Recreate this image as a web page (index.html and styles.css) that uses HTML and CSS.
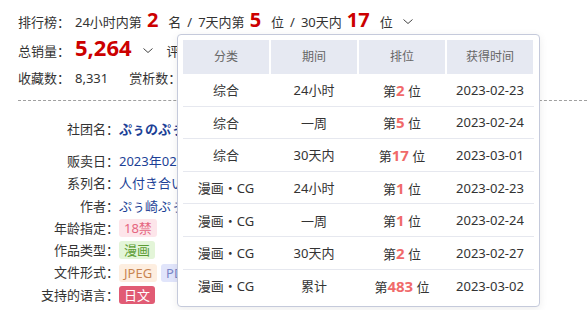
FILE: index.html
```html
<!DOCTYPE html>
<html lang="zh-CN">
<head>
<meta charset="utf-8">
<title>作品信息</title>
<link rel="stylesheet" href="styles.css">
</head>
<body>
<div class="page">
  <div class="stats">
    <div class="srow r1">
      <span class="lbl">排行榜：</span><span>24小时内第</span><b class="big">2</b><span>名</span><span class="sl">/</span><span>7天内第</span><b class="big">5</b><span>位</span><span class="sl">/</span><span>30天内</span><b class="big">17</b><span>位</span><svg class="chev chev1" viewBox="0 0 10 5"><path d="M0.5 0.5 L5 4.5 L9.5 0.5" /></svg>
    </div>
    <div class="srow r2">
      <span class="lbl">总销量：</span><b class="huge">5,264</b><svg class="chev chev2" viewBox="0 0 10 5"><path d="M0.5 0.5 L5 4.5 L9.5 0.5" /></svg><span class="after">评价数：4.87</span>
    </div>
    <div class="srow r3">
      <span class="lbl">收藏数：</span><span>8,331</span><span class="lbl2">赏析数：</span><span>126</span>
    </div>
  </div>
  <div class="info">
    <div class="irow first"><span class="ilbl">社团名：</span><span class="val strong">ぷぅのぷぅ</span></div>
    <div class="irow"><span class="ilbl">贩卖日：</span><span class="val">2023年02月23日 0时</span></div>
    <div class="irow"><span class="ilbl">系列名：</span><span class="val">人付き合いが苦手な</span></div>
    <div class="irow"><span class="ilbl">作者：</span><span class="val">ぷぅ崎ぷぅ</span></div>
    <div class="irow"><span class="ilbl">年龄指定：</span><span class="tag pink">18禁</span></div>
    <div class="irow"><span class="ilbl">作品类型：</span><span class="tag green">漫画</span></div>
    <div class="irow"><span class="ilbl">文件形式：</span><span class="tag orange">JPEG</span><span class="tag blue">PDF</span></div>
    <div class="irow"><span class="ilbl">支持的语言：</span><span class="tag red">日文</span></div>
  </div>

  <div class="pop">
    <div class="prow head">
      <div class="hc">分类</div><div class="hc">期间</div><div class="hc">排位</div><div class="hc">获得时间</div>
    </div>
    <div class="prow"><div>综合</div><div>24小时</div><div>第<b class="rk">2</b> 位</div><div>2023-02-23</div></div>
    <div class="prow"><div>综合</div><div>一周</div><div>第<b class="rk">5</b> 位</div><div>2023-02-24</div></div>
    <div class="prow"><div>综合</div><div>30天内</div><div>第<b class="rk">17</b> 位</div><div>2023-03-01</div></div>
    <div class="prow"><div>漫画・CG</div><div>24小时</div><div>第<b class="rk">1</b> 位</div><div>2023-02-23</div></div>
    <div class="prow"><div>漫画・CG</div><div>一周</div><div>第<b class="rk">1</b> 位</div><div>2023-02-24</div></div>
    <div class="prow"><div>漫画・CG</div><div>30天内</div><div>第<b class="rk">2</b> 位</div><div>2023-02-27</div></div>
    <div class="prow last"><div>漫画・CG</div><div>累计</div><div>第<b class="rk">483</b> 位</div><div>2023-03-02</div></div>
  </div>
</div>
</body>
</html>
```

FILE: styles.css
```css
* { box-sizing: border-box; }
html, body { margin: 0; padding: 0; background: #fff; }
body {
  font-family: "Noto Sans", "Noto Sans CJK SC", sans-serif;
  font-size: 13px;
  color: #333;
  width: 587px;
  height: 310px;
  overflow: hidden;
}
.page { position: relative; padding-top: 8px; }
.stats { padding-left: 18px; }
.srow { white-space: nowrap; }
.r1 { height: 28px; line-height: 28px; }
.r2 { height: 29px; line-height: 29px; }
.r3 { height: 26px; line-height: 26px; }
.lbl { display: inline-block; width: 57px; }
.big {
  font-size: 20px; line-height: 1; color: #cc0000; font-weight: 700;
  margin: 0 10px 0 5px;
}
.huge { font-size: 22px; line-height: 1; color: #cc0000; font-weight: 700; }
.sl { margin: 0 6px; }
.chev { display: inline-block; fill: none; stroke: #444; stroke-width: 1; }
.chev1 { width: 10px; height: 5px; margin-left: 10px; vertical-align: 3px; }
.chev2 { width: 10px; height: 5px; margin-left: 11px; vertical-align: 3px; }
.after { margin-left: 14px; }
.lbl2 { margin-left: 21px; }

.info {
  margin-top: 9px;
  border-top: 1px dashed #a0a0a0;
  margin-left: 18px;
  padding-top: 17px;
}
.irow { height: 22.3px; line-height: 22.3px; white-space: nowrap; display: flex; align-items: center; }
.irow.first { height: 22px; line-height: 22px; margin-bottom: 10px; }
.ilbl { display: inline-block; width: 101px; text-align: right; }
.val { color: #1c3f96; }
.val.strong { font-weight: 700; }
.tag {
  display: inline-block; height: 18px; line-height: 18px; padding: 0 5px;
  border-radius: 3px; font-size: 13px; margin-right: 4px;
}
.pink { background: #fde5ea; color: #e5667f; }
.green { background: #e3f5d8; color: #5b9c34; }
.orange { background: #fdeee0; color: #c98552; }
.blue { background: #e1e5fb; color: #7a86c8; }
.red { background: #e15b74; color: #fff; }

.pop {
  position: absolute;
  left: 177px;
  top: 34px;
  width: 363px;
  background: #fff;
  border: 1px solid #c5cadb;
  border-radius: 4px;
  box-shadow: 0 2px 8px rgba(0, 0, 0, 0.08);
  padding: 5px 5px 4px;
}
.prow {
  display: grid;
  grid-template-columns: repeat(4, 86px);
  column-gap: 2px;
  height: 32.6px;
  border-bottom: 1px solid #e6e8ef;
  align-items: center;
  text-align: center;
  font-size: 13px;
  color: #333;
}
.prow.last { border-bottom: none; }
.prow.head { height: 34px; border-bottom: none; }
.hc {
  background: #e6e9f2;
  height: 34px;
  line-height: 34px;
  font-size: 12px;
  color: #666;
}
.rk { color: #f06a6a; font-size: 15px; font-weight: 700; }
```
